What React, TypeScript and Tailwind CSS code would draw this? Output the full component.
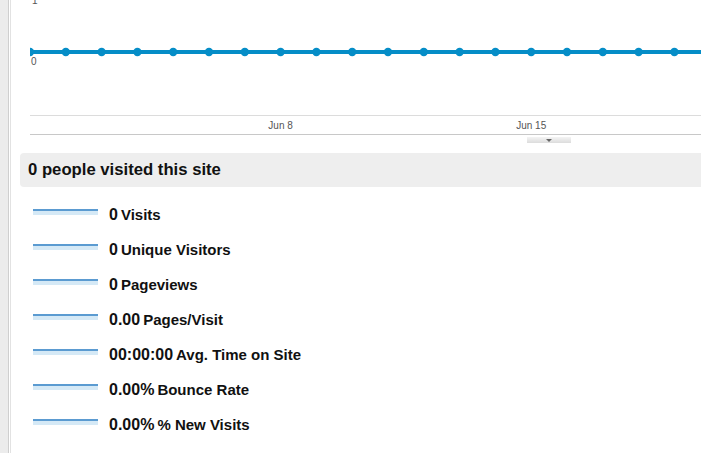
import React from "react";

const METRICS = [
  { value: "0", label: "Visits" },
  { value: "0", label: "Unique Visitors" },
  { value: "0", label: "Pageviews" },
  { value: "0.00", label: "Pages/Visit" },
  { value: "00:00:00", label: "Avg. Time on Site" },
  { value: "0.00%", label: "Bounce Rate" },
  { value: "0.00%", label: "% New Visits" },
];

const STEP = 35.8;
const DOTS = Array.from({ length: 20 }, (_, i) => i * STEP);

function Chart() {
  return (
    <svg width="671" height="135" className="block" style={{ fontFamily: "'Liberation Sans', Arial, sans-serif" }}>
      <text x="2" y="4" fontSize="10" fill="#555">1</text>
      <line x1="0" y1="52" x2="671" y2="52" stroke="#058dc7" strokeWidth="4" />
      {DOTS.map(x => (
        <circle key={x} cx={x} cy="52" r="4.2" fill="#058dc7" />
      ))}
      <text x="1" y="65" fontSize="10" fill="#555">0</text>
      <line x1="0" y1="115.5" x2="671" y2="115.5" stroke="#dcdcdc" strokeWidth="1" />
      <line x1="0" y1="134.5" x2="671" y2="134.5" stroke="#c8c8c8" strokeWidth="1" />
      <text x={7 * STEP} y="129" fontSize="10" fill="#555" textAnchor="middle">Jun 8</text>
      <text x={14 * STEP} y="129" fontSize="10" fill="#555" textAnchor="middle">Jun 15</text>
    </svg>
  );
}

function Spark() {
  return (
    <div className="w-[65px] flex flex-col mt-[-5px]">
      <div className="h-[2px] bg-[#5b9bd1]" />
      <div className="h-[4px] bg-[#d5e9f6]" />
    </div>
  );
}

export default function App() {
  return (
    <div className="w-[701px] h-[453px] flex bg-white overflow-hidden" style={{ fontFamily: "'Liberation Sans', Arial, sans-serif" }}>
      <div className="w-[9px] bg-[#ececec] border-r border-[#cfcfcf]" />
      <div className="w-[2px] border-r border-[#e2e2e2]" />
      <div className="flex-1 pl-[9px]">
        <div className="pl-[10px]">
          <Chart />
          <div className="ml-[497px] mt-[2px] w-[44px] h-[6px] bg-gradient-to-b from-[#f4f4f4] to-[#dcdcdc] flex items-center justify-center">
            <div className="w-0 h-0 border-l-[3px] border-r-[3px] border-t-[3px] border-l-transparent border-r-transparent border-t-[#666]" />
          </div>
        </div>
        <div className="mt-[10px] h-[34px] bg-[#eeeeee] rounded-l-[4px] flex items-center pl-[8px]">
          <span className="text-[16.7px] font-bold text-[#111]">0 people visited this site</span>
        </div>
        <div className="mt-[10px]">
          {METRICS.map(m => (
            <div key={m.label} className="h-[35px] flex items-center pl-[13px]">
              <Spark />
              <div className="ml-[11px] font-bold text-[#111] flex items-baseline gap-[3px]">
                <span className="text-[16px]">{m.value}</span>
                <span className="text-[15px]">{m.label}</span>
              </div>
            </div>
          ))}
        </div>
      </div>
    </div>
  );
}
